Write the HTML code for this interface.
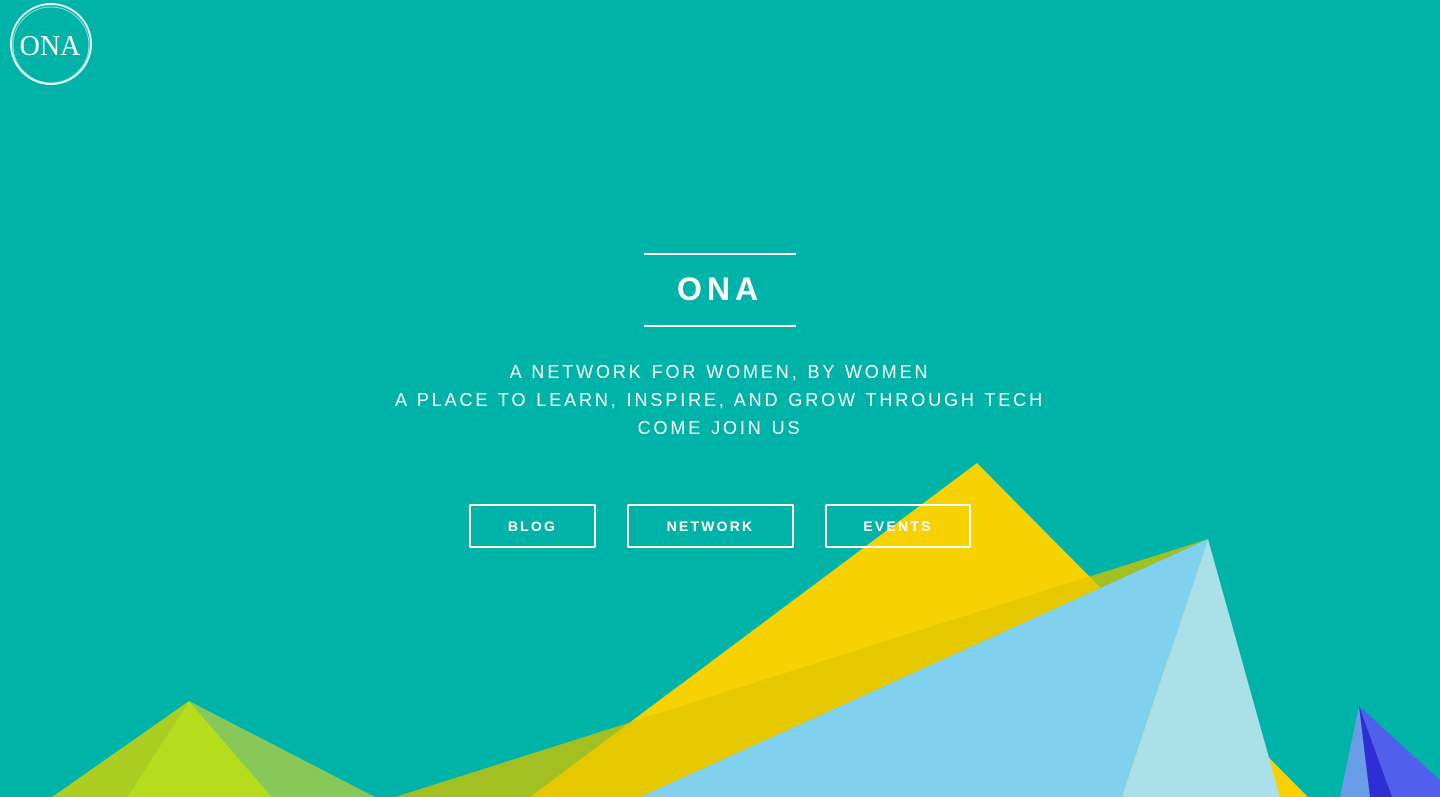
<!DOCTYPE html>
<html><head><meta charset="utf-8"><style>
html,body{margin:0;padding:0;}
body{width:1440px;height:797px;background:#00b3a9;position:relative;overflow:hidden;font-family:"Liberation Sans",sans-serif;color:#fff;}
.t{position:absolute;left:0;width:1440px;text-align:center;}
.hl{position:absolute;left:644px;width:152px;height:2px;background:#fff;}
.btn{position:absolute;top:504px;height:40px;border:2px solid #fff;border-radius:2px;font-weight:bold;font-size:14px;letter-spacing:2.2px;line-height:40px;text-align:center;}
</style></head><body>
<svg width="1440" height="797" style="position:absolute;left:0;top:0">
<defs><clipPath id="y"><polygon points="977,463 530,797 1308,797"/></clipPath></defs>
<polygon points="977,463 530,797 1308,797" fill="#f8d100"/>
<polygon points="395,797 1208,539 640,797" fill="#a2c022"/>
<polygon points="395,797 1208,539 640,797" fill="#e6c800" clip-path="url(#y)"/>
<polygon points="1208,539 640,797 1122,797" fill="#80d1ee"/>
<polygon points="1208,539 1122,797 1280,797" fill="#abe0e8"/>
<polygon points="189,701 52,797 127,797" fill="#acce22"/>
<polygon points="189,701 272,797 375,797" fill="#88c858"/>
<polygon points="189,701 127,797 272,797" fill="#b5dd1c"/>
<polygon points="1359,706 1340,797 1372,797" fill="#6a9de8"/>
<polygon points="1359,706 1440,780 1440,797 1390,797" fill="#5060ec"/>
<polygon points="1359,706 1370,797 1392,797" fill="#2e2ed4"/>
<circle cx="51" cy="44" r="40" fill="none" stroke="#fff" stroke-width="2" opacity="0.9"/>
<circle cx="51" cy="45" r="38" fill="none" stroke="#fff" stroke-width="1" opacity="0.6"/>
<text x="50" y="55" text-anchor="middle" font-family="Liberation Serif,serif" font-size="28" fill="#fff">ONA</text>
</svg>
<div class="hl" style="top:253px"></div>
<div class="t" style="top:271px;font-size:32px;font-weight:bold;letter-spacing:5px;">ONA</div>
<div class="hl" style="top:325px"></div>
<div class="t" style="top:358px;font-size:18px;letter-spacing:2.9px;line-height:28px;">A NETWORK FOR WOMEN, BY WOMEN<br>A PLACE TO LEARN, INSPIRE, AND GROW THROUGH TECH<br>COME JOIN US</div>
<div class="btn" style="left:469px;width:123px;">BLOG</div>
<div class="btn" style="left:627px;width:163px;">NETWORK</div>
<div class="btn" style="left:825px;width:142px;">EVENTS</div>
</body></html>
